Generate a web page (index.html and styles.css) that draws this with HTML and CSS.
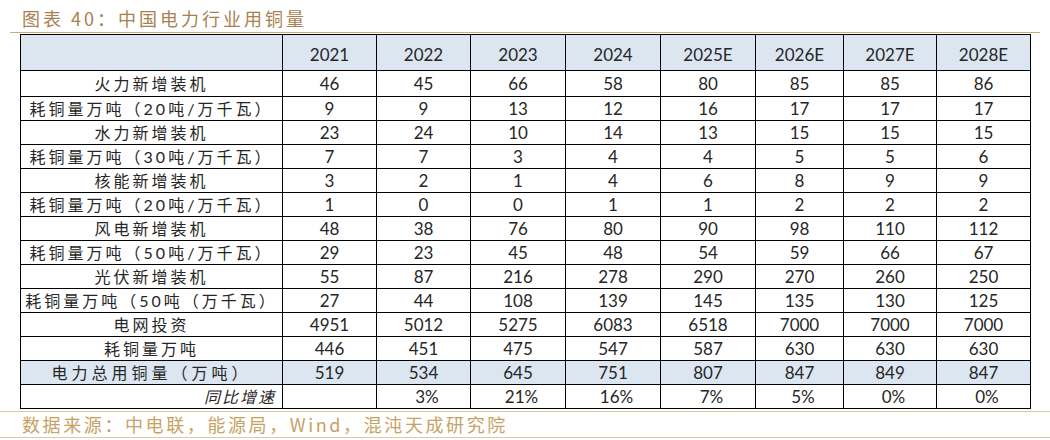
FILE: index.html
```html
<!DOCTYPE html>
<html lang="zh">
<head>
<meta charset="utf-8">
<link rel="stylesheet" href="styles.css">
</head>
<body>
<div class="page">
  <div class="title">图表 40：中国电力行业用铜量</div>
  <table class="data">
    <colgroup>
      <col class="c-label"><col class="c94"><col class="c94"><col class="c95"><col class="c95"><col class="c95"><col class="c88"><col class="c93"><col class="c94">
    </colgroup>
    <tr class="head"><th></th><th>2021</th><th>2022</th><th>2023</th><th>2024</th><th>2025E</th><th>2026E</th><th>2027E</th><th>2028E</th></tr>
    <tr class="first"><td class="lbl">火力新增装机</td><td>46</td><td>45</td><td>66</td><td>58</td><td>80</td><td>85</td><td>85</td><td>86</td></tr>
    <tr><td class="lbl">耗铜量万吨（20吨/万千瓦）</td><td>9</td><td>9</td><td>13</td><td>12</td><td>16</td><td>17</td><td>17</td><td>17</td></tr>
    <tr><td class="lbl">水力新增装机</td><td>23</td><td>24</td><td>10</td><td>14</td><td>13</td><td>15</td><td>15</td><td>15</td></tr>
    <tr><td class="lbl">耗铜量万吨（30吨/万千瓦）</td><td>7</td><td>7</td><td>3</td><td>4</td><td>4</td><td>5</td><td>5</td><td>6</td></tr>
    <tr><td class="lbl">核能新增装机</td><td>3</td><td>2</td><td>1</td><td>4</td><td>6</td><td>8</td><td>9</td><td>9</td></tr>
    <tr><td class="lbl">耗铜量万吨（20吨/万千瓦）</td><td>1</td><td>0</td><td>0</td><td>1</td><td>1</td><td>2</td><td>2</td><td>2</td></tr>
    <tr><td class="lbl">风电新增装机</td><td>48</td><td>38</td><td>76</td><td>80</td><td>90</td><td>98</td><td>110</td><td>112</td></tr>
    <tr><td class="lbl">耗铜量万吨（50吨/万千瓦）</td><td>29</td><td>23</td><td>45</td><td>48</td><td>54</td><td>59</td><td>66</td><td>67</td></tr>
    <tr><td class="lbl">光伏新增装机</td><td>55</td><td>87</td><td>216</td><td>278</td><td>290</td><td>270</td><td>260</td><td>250</td></tr>
    <tr><td class="lbl">耗铜量万吨（50吨（万千瓦）</td><td>27</td><td>44</td><td>108</td><td>139</td><td>145</td><td>135</td><td>130</td><td>125</td></tr>
    <tr><td class="lbl">电网投资</td><td>4951</td><td>5012</td><td>5275</td><td>6083</td><td>6518</td><td>7000</td><td>7000</td><td>7000</td></tr>
    <tr><td class="lbl">耗铜量万吨</td><td>446</td><td>451</td><td>475</td><td>547</td><td>587</td><td>630</td><td>630</td><td>630</td></tr>
    <tr class="total"><td class="lbl strong">电力总用铜量（万吨）</td><td>519</td><td>534</td><td>645</td><td>751</td><td>807</td><td>847</td><td>849</td><td>847</td></tr>
    <tr class="pct"><td class="lbl yoy">同比增速</td><td></td><td>3%</td><td>21%</td><td>16%</td><td>7%</td><td>5%</td><td>0%</td><td>0%</td></tr>
  </table>
  <div class="source">数据来源：中电联，能源局，Wind，混沌天成研究院</div>
</div>
</body>
</html>
```

FILE: styles.css
```css
html, body {
  margin: 0;
  padding: 0;
  background: #ffffff;
}

.page {
  width: 1050px;
  height: 440px;
  overflow: hidden;
  display: flex;
  flex-direction: column;
}

.title {
  height: 33px;
  margin: 0 10px;
  padding-left: 12px;
  padding-top: 4px;
  box-sizing: border-box;
  border-bottom: 1px solid #c9aa7c;
  font-family: "Noto Sans CJK SC", sans-serif;
  font-size: 18px;
  letter-spacing: 3px;
  line-height: 28px;
  color: #a8814f;
}

.data {
  margin-left: 20px;
  margin-top: 1px;
  border-collapse: collapse;
  table-layout: fixed;
  width: 1010px;
  font-family: Lato, "Noto Sans CJK SC", sans-serif;
  font-size: 17px;
  color: #262626;
}

.c-label { width: 262px; }
.c94 { width: 94px; }
.c95 { width: 95px; }
.c88 { width: 88px; }
.c93 { width: 93px; }

.data th,
.data td {
  border: 1.4px solid #000;
  padding: 0;
  text-align: center;
  font-weight: normal;
  white-space: nowrap;
  line-height: 20px;
}

.data tr { height: 24px; }
.data tr.first { height: 26px; }
.data tr.head { height: 36px; }

.head th { background: #dce6f1; padding-top: 4px; }
.total td { background: #dce6f1; }

.lbl {
  font-size: 16px;
  letter-spacing: 3px;
}

.strong {
  font-weight: bold;
  letter-spacing: 4px;
}

.yoy {
  font-style: italic;
  text-align: right !important;
  padding-right: 6px !important;
  letter-spacing: 2px;
}

.pct td { padding-left: 7px; }
.pct td.yoy { padding-left: 0; }

.source {
  margin-top: 2px;
  height: 27px;
  box-sizing: border-box;
  border-top: 1.5px solid #dcc8a4;
  border-bottom: 1.5px solid #dcc8a4;
  padding-left: 22px;
  font-family: "Noto Sans CJK SC", sans-serif;
  font-size: 18px;
  letter-spacing: 2.6px;
  line-height: 24px;
  color: #c7a265;
}
```
